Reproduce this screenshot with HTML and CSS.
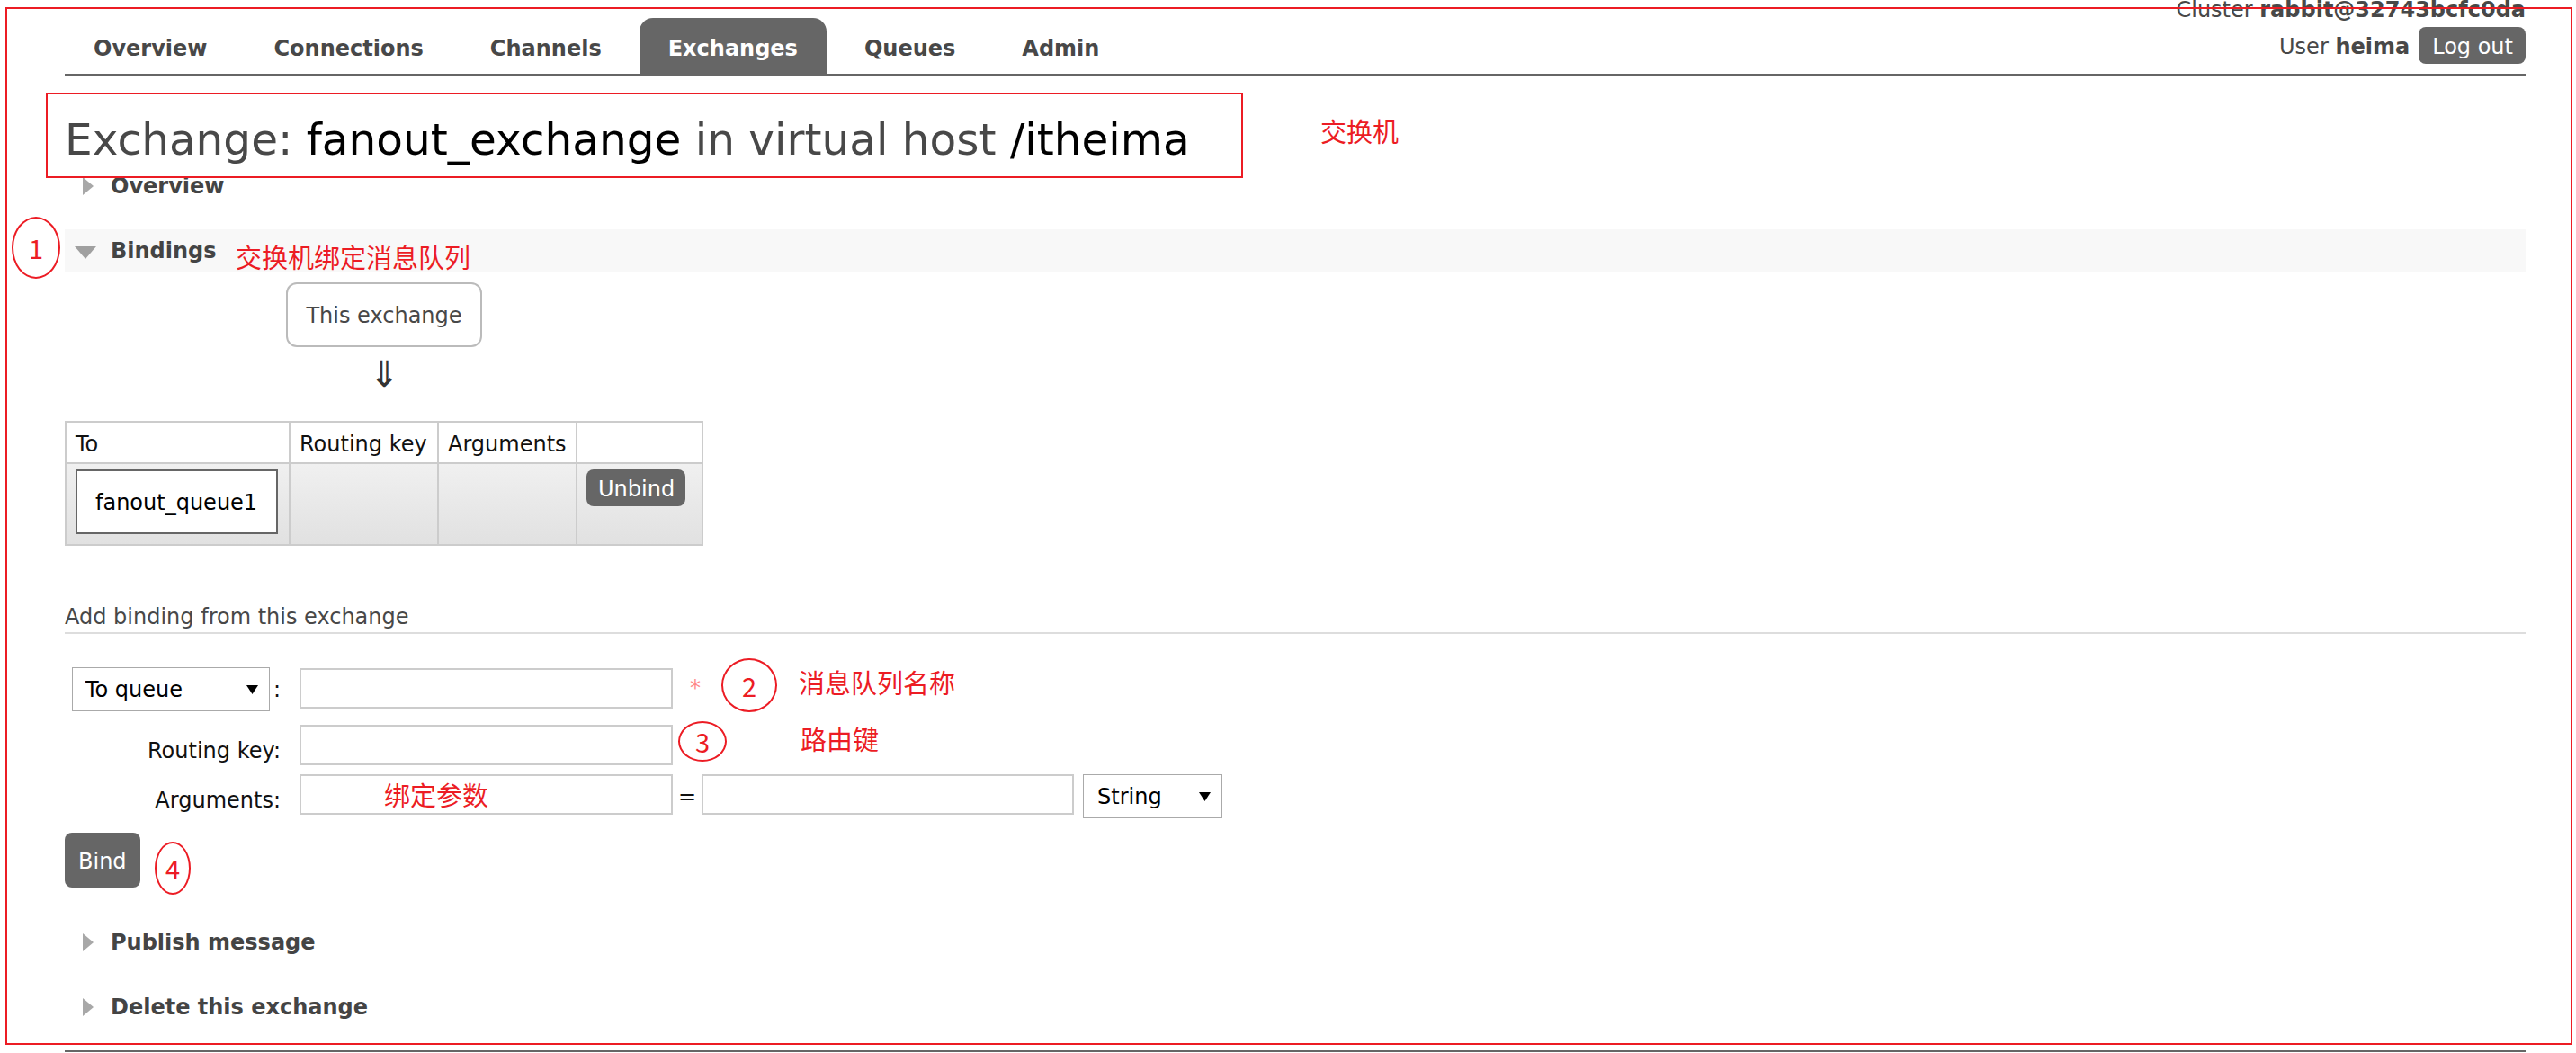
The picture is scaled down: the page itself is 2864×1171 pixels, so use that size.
FILE: index.html
```html
<!DOCTYPE html>
<html lang="en">
<head>
<meta charset="utf-8">
<title>RabbitMQ Management - Exchange fanout_exchange</title>
<link rel="stylesheet" href="styles.css">
</head>
<body>
<div class="page">
  <header class="header">
    <nav class="tabs">
      <a class="tab">Overview</a>
      <a class="tab">Connections</a>
      <a class="tab">Channels</a>
      <a class="tab active">Exchanges</a>
      <a class="tab">Queues</a>
      <a class="tab">Admin</a>
    </nav>
    <div class="userbox">
      <div class="cluster">Cluster <b>rabbit@32743bcfc0da</b></div>
      <div class="user">User&nbsp;<b>heima</b><button class="btn logout">Log out</button></div>
    </div>
  </header>

  <main>
    <h1 class="title">Exchange: <span class="val">fanout_exchange</span> in virtual host <span class="val">/itheima</span></h1>

    <section class="sec">
      <h2 class="sec-head"><span class="ico"><svg class="tri-r" width="12" height="20" viewBox="0 0 12 20"><polygon points="0,0 12,10 0,20" fill="#a8a8a8"/></svg></span>Overview</h2>
    </section>

    <section class="sec">
      <h2 class="sec-head open"><span class="ico"><svg class="tri-d" width="24" height="14" viewBox="0 0 24 14"><polygon points="0,0 24,0 12,14" fill="#a0a0a0"/></svg></span>Bindings</h2>
      <div class="sec-body">
        <div class="flow">
          <div class="xbox">This exchange</div>
          <div class="arrow">&dArr;</div>
          <table class="btable">
            <thead>
              <tr><th class="c1">To</th><th class="c2">Routing key</th><th class="c3">Arguments</th><th class="c4"></th></tr>
            </thead>
            <tbody>
              <tr>
                <td class="c1"><span class="qbox">fanout_queue1</span></td>
                <td class="c2"></td>
                <td class="c3"></td>
                <td class="c4"><button class="btn unbind">Unbind</button></td>
              </tr>
            </tbody>
          </table>
        </div>

        <h3 class="subhead">Add binding from this exchange</h3>

        <form class="form">
          <div class="frow r1">
            <div class="flabel"><div class="sel w220"><span>To queue</span><svg width="13" height="10" viewBox="0 0 13 10"><polygon points="0,0 13,0 6.5,10" fill="#000"/></svg></div><span class="colon">:</span></div>
            <div class="inp first"></div>
            <span class="mand">*</span>
          </div>
          <div class="frow r2">
            <div class="flabel"><span class="ltext">Routing key:</span></div>
            <div class="inp"></div>
          </div>
          <div class="frow r3">
            <div class="flabel"><span class="ltext">Arguments:</span></div>
            <div class="inp"></div>
            <span class="eq">=</span>
            <div class="inp w414"></div>
            <div class="sel w155"><span>String</span><svg width="13" height="10" viewBox="0 0 13 10"><polygon points="0,0 13,0 6.5,10" fill="#000"/></svg></div>
          </div>
          <button type="button" class="btn bind">Bind</button>
        </form>
      </div>
    </section>

    <section class="sec">
      <h2 class="sec-head"><span class="ico"><svg class="tri-r" width="12" height="20" viewBox="0 0 12 20"><polygon points="0,0 12,10 0,20" fill="#a8a8a8"/></svg></span>Publish message</h2>
    </section>

    <section class="sec">
      <h2 class="sec-head"><span class="ico"><svg class="tri-r" width="12" height="20" viewBox="0 0 12 20"><polygon points="0,0 12,10 0,20" fill="#a8a8a8"/></svg></span>Delete this exchange</h2>
    </section>
  </main>
  <footer class="footer"></footer>
</div>

<!-- red annotations drawn over the screenshot -->
<div class="anno rect outer"></div>
<div class="anno rect titlebox"></div>
<div class="anno note n0">交换机</div>
<div class="anno ring c1">1</div>
<div class="anno note n1">交换机绑定消息队列</div>
<div class="anno ring c2">2</div>
<div class="anno note n2">消息队列名称</div>
<div class="anno ring c3">3</div>
<div class="anno note n3">路由键</div>
<div class="anno note n4">绑定参数</div>
<div class="anno ring c4">4</div>
</body>
</html>
```

FILE: styles.css
```css
html, body {
  margin: 0;
  padding: 0;
  background: #ffffff;
}
body {
  font-family: "DejaVu Sans", Verdana, sans-serif;
  font-size: 24px;
  line-height: 28px;
  color: #484848;
  overflow: hidden;
}

.page {
  width: 2736px;
  margin: -3px 0 0 72px;
}

/* ---------- header ---------- */
.header {
  display: flex;
  justify-content: space-between;
  align-items: flex-end;
  border-bottom: 2px solid #666666;
}
.tabs {
  display: flex;
  gap: 10px;
}
.tab {
  padding: 20px 32px 14px;
  line-height: 28px;
  font-weight: bold;
  color: #484848;
  border-radius: 15px 15px 0 0;
}
.tab.active {
  background: #666666;
  color: #ffffff;
}
.userbox {
  display: flex;
  flex-direction: column;
  align-items: flex-end;
  margin-bottom: 11px;
}
.user {
  margin-top: 5px;
  display: flex;
  align-items: baseline;
}
.btn {
  font-family: inherit;
  font-size: 24px;
  line-height: 28px;
  background: #666666;
  color: #ffffff;
  border: 0;
  border-radius: 8px;
  margin: 0;
}
.logout {
  margin-left: 10px;
  padding: 8px 14px 5px 15px;
}

/* ---------- title ---------- */
.title {
  margin: 43px 0 0;
  font-size: 48.5px;
  line-height: 56px;
  font-weight: normal;
  color: #484848;
}
.title .val {
  color: #000000;
}

/* ---------- sections ---------- */
.sec {
  margin-bottom: 24px;
}
.sec-head {
  display: flex;
  align-items: center;
  height: 48px;
  margin: 0;
  font-size: 24px;
  line-height: 48px;
  font-weight: bold;
  color: #444444;
}
.sec-head.open {
  background: #f8f8f8;
}
.ico {
  width: 51px;
  height: 48px;
  display: flex;
  align-items: center;
}
.tri-r { margin-left: 20px; }
.tri-d { margin-left: 11px; margin-top: 3px; }

.sec-body {
  padding-bottom: 13px;
}

/* bindings diagram */
.flow {
  display: inline-flex;
  flex-direction: column;
  align-items: center;
}
.xbox {
  margin-top: 11px;
  border: 2px solid #bbbbbb;
  border-radius: 12px;
  padding: 21px 20px 19px;
  color: #484848;
}
.arrow {
  height: 82px;
  font-size: 40px;
  line-height: 60px;
  color: #333333;
}
.btable {
  border-collapse: separate;
  border-spacing: 0;
  border: 2px solid #cccccc;
  color: #111111;
}
.btable th, .btable td {
  box-sizing: border-box;
  text-align: left;
  font-weight: normal;
  padding: 10px 10px 6px;
  line-height: 28px;
}
.btable th {
  background: #ffffff;
  border-bottom: 2px solid #cccccc;
}
.btable td {
  padding: 6px 10px 11px;
  vertical-align: top;
  background: linear-gradient(#f0f0f0, #e1e1e1);
  height: 89px;
}
.btable .c2, .btable .c3, .btable .c4 {
  border-left: 2px solid #cccccc;
}
.btable .c1 { width: 247px; }
.btable .c2 { width: 165px; }
.btable .c3 { width: 154px; }
.btable .c4 { width: 140px; }
.qbox {
  display: inline-block;
  border: 2px solid #666666;
  background: #ffffff;
  padding: 21px 21px 19px 20px;
  color: #000000;
}
.unbind {
  padding: 8px 12px 5px 13px;
}

/* add binding form */
.subhead {
  margin: 65px 0 0;
  padding-bottom: 3px;
  font-size: 24px;
  line-height: 28px;
  font-weight: normal;
  color: #484848;
  border-bottom: 2px solid #dddddd;
}
.form {
  margin: 37px 0 0;
}
.frow {
  display: flex;
  align-items: flex-start;
}
.r2 { margin-top: 15px; }
.r3 { margin-top: 10px; }
.flabel {
  width: 240px;
  margin-right: 21px;
  display: flex;
  justify-content: flex-end;
  align-items: baseline;
  color: #111111;
}
.ltext {
  padding-top: 15px;
}
.colon {
  margin-left: 4px;
}
.inp {
  width: 415px;
  height: 45px;
  box-sizing: border-box;
  border: 2px solid #cccccc;
  background: #ffffff;
}
.inp.first { margin-top: 1px; }
.inp.w414 { width: 414px; }
.mand {
  margin-left: 19px;
  padding-top: 9px;
  color: #ff8888;
}
.eq {
  margin: 0 6px;
  align-self: center;
  color: #111111;
}
.sel {
  display: flex;
  justify-content: space-between;
  align-items: center;
  height: 49px;
  box-sizing: border-box;
  border: 1px solid #aaaaaa;
  padding: 0 12px 0 14px;
  background: #ffffff;
  color: #000000;
}
.sel.w220 { width: 220px; }
.sel.w155 { width: 155px; margin-left: 10px; padding-left: 15px; }
.bind {
  display: block;
  margin-top: 16px;
  padding: 18px 15px 15px;
}

.footer {
  border-top: 2px solid #666666;
  height: 10px;
}

/* ---------- annotations ---------- */
.anno {
  position: absolute;
  color: #ec1c24;
  font-family: "Noto Sans CJK SC", "DejaVu Sans", sans-serif;
}
.rect {
  box-sizing: border-box;
  border: 2px solid #ec1c24;
}
.rect.outer { left: 6px; top: 8px; width: 2854px; height: 1154px; }
.rect.titlebox { left: 51px; top: 103px; width: 1331px; height: 95px; }
.note {
  font-size: 29px;
  line-height: 29px;
  white-space: nowrap;
}
.n0 { left: 1468px; top: 131px; }
.n1 { left: 262px; top: 271px; }
.n2 { left: 888px; top: 744px; }
.n3 { left: 890px; top: 807px; }
.n4 { left: 427px; top: 869px; }
.ring {
  box-sizing: border-box;
  border: 2px solid #ec1c24;
  border-radius: 50%;
  display: flex;
  align-items: center;
  justify-content: center;
  font-size: 29px;
  line-height: 29px;
}
.ring.c1 { left: 13px; top: 241px; width: 54px; height: 69px; }
.ring.c2 { left: 802px; top: 732px; width: 62px; height: 60px; }
.ring.c3 { left: 754px; top: 802px; width: 54px; height: 45px; }
.ring.c4 { left: 172px; top: 936px; width: 40px; height: 59px; }
```
